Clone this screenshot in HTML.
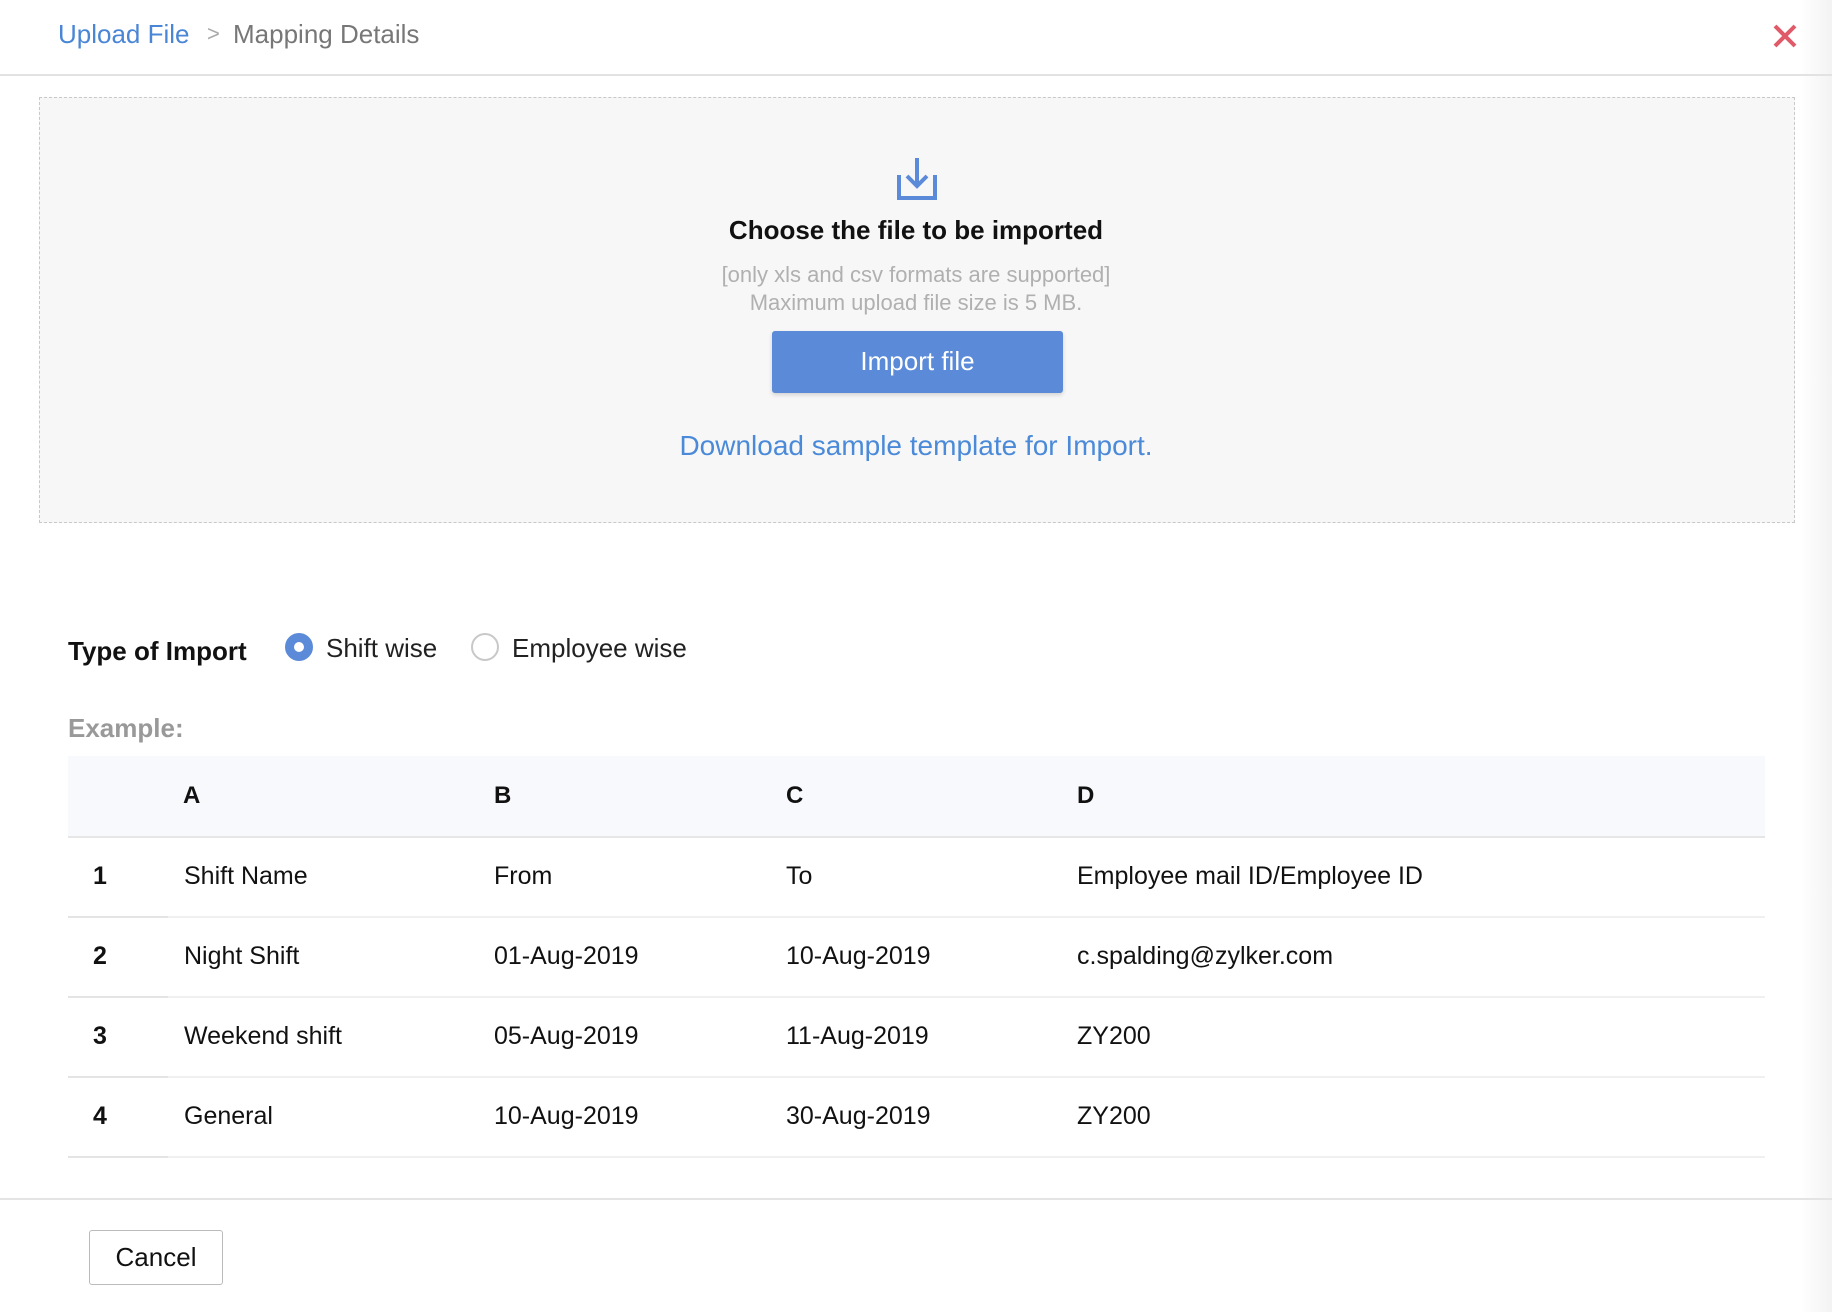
<!DOCTYPE html>
<html><head><meta charset="utf-8"><style>
body{margin:0;width:1832px;height:1312px;position:relative;background:#fff;font-family:"Liberation Sans",sans-serif;overflow:hidden}
.a{position:absolute;white-space:nowrap}
.shade{position:absolute;right:0;top:0;width:32px;height:1312px;background:linear-gradient(to right,#fff,#f3f3f3)}
</style></head><body>
<div class="shade"></div>
<div class="a" style="left:58px;top:19px;font-size:26px;color:#4a86d6">Upload File</div>
<div class="a" style="left:207px;top:21px;font-size:22px;color:#aaa">&gt;</div>
<div class="a" style="left:233px;top:19px;font-size:26px;color:#777">Mapping Details</div>
<svg class="a" style="left:1772px;top:23px" width="26" height="26" viewBox="0 0 26 26"><path d="M3 3L23 23M23 3L3 23" stroke="#e05a68" stroke-width="4"/></svg>
<div class="a" style="left:0;top:74px;width:1832px;height:2px;background:#e2e2e2"></div>
<div class="a" style="left:39px;top:97px;width:1754px;height:424px;border:1px dashed #c8c8c8;background:#f7f7f7"></div>
<svg class="a" style="left:897px;top:158px" width="40" height="42" viewBox="0 0 40 42"><path d="M2 17V40H38V17" fill="none" stroke="#5a8ad8" stroke-width="4"/><path d="M20 0V28M10 18L20 28L30 18" fill="none" stroke="#5a8ad8" stroke-width="4"/></svg>
<div class="a" style="left:0;width:1832px;text-align:center;top:215px;font-size:26px;font-weight:bold;color:#111">Choose the file to be imported</div>
<div class="a" style="left:0;width:1832px;text-align:center;top:261px;font-size:22px;color:#b0b0b0;line-height:28px">[only xls and csv formats are supported]<br>Maximum upload file size is 5 MB.</div>
<div class="a" style="left:772px;top:331px;width:291px;height:62px;background:#5a8ad8;border-radius:3px;box-shadow:0 2px 4px rgba(0,0,0,.15);color:#fff;font-size:26px;text-align:center;line-height:60px">Import file</div>
<div class="a" style="left:0;width:1832px;text-align:center;top:430px;font-size:28px;color:#4a8ad8">Download sample template for Import.</div>
<div class="a" style="left:68px;top:636px;font-size:26px;font-weight:bold;color:#111">Type of Import</div>
<div class="a" style="left:285px;top:633px;width:22px;height:22px;border:3px solid #5a8ad8;background:#5a8ad8;border-radius:50%"></div>
<div class="a" style="left:294px;top:642px;width:10px;height:10px;background:#fff;border-radius:50%"></div>
<div class="a" style="left:326px;top:633px;font-size:26px;color:#222">Shift wise</div>
<div class="a" style="left:471px;top:633px;width:24px;height:24px;border:2px solid #c8c8c8;border-radius:50%;background:#fff"></div>
<div class="a" style="left:512px;top:633px;font-size:26px;color:#222">Employee wise</div>
<div class="a" style="left:68px;top:713px;font-size:26px;font-weight:bold;color:#999">Example:</div>
<div class="a" style="left:68px;top:756px;width:1697px;height:80px;background:#f8f9fc;border-bottom:2px solid #e6e6e6"></div>
<div class="a" style="left:183px;top:782px;font-size:24px;font-weight:bold;color:#111">A</div>
<div class="a" style="left:494px;top:782px;font-size:24px;font-weight:bold;color:#111">B</div>
<div class="a" style="left:786px;top:782px;font-size:24px;font-weight:bold;color:#111">C</div>
<div class="a" style="left:1077px;top:782px;font-size:24px;font-weight:bold;color:#111">D</div>

<div class="a" style="left:68px;top:916px;width:1697px;height:2px;background:#f0f0f0"></div>
<div class="a" style="left:68px;top:996px;width:1697px;height:2px;background:#f0f0f0"></div>
<div class="a" style="left:68px;top:1076px;width:1697px;height:2px;background:#f0f0f0"></div>
<div class="a" style="left:68px;top:1156px;width:1697px;height:2px;background:#f0f0f0"></div>
<div class="a" style="left:68px;top:916px;width:100px;height:2px;background:#e4e4e4"></div>
<div class="a" style="left:68px;top:996px;width:100px;height:2px;background:#e4e4e4"></div>
<div class="a" style="left:68px;top:1076px;width:100px;height:2px;background:#e4e4e4"></div>
<div class="a" style="left:68px;top:1156px;width:100px;height:2px;background:#e4e4e4"></div>

<div style="font-size:25px;color:#111">
<div class="a" style="left:93px;top:862px;font-weight:bold">1</div>
<div class="a" style="left:184px;top:862px">Shift Name</div>
<div class="a" style="left:494px;top:862px">From</div>
<div class="a" style="left:786px;top:862px">To</div>
<div class="a" style="left:1077px;top:862px">Employee mail ID/Employee ID</div>
<div class="a" style="left:93px;top:942px;font-weight:bold">2</div>
<div class="a" style="left:184px;top:942px">Night Shift</div>
<div class="a" style="left:494px;top:942px">01-Aug-2019</div>
<div class="a" style="left:786px;top:942px">10-Aug-2019</div>
<div class="a" style="left:1077px;top:942px">c.spalding@zylker.com</div>
<div class="a" style="left:93px;top:1022px;font-weight:bold">3</div>
<div class="a" style="left:184px;top:1022px">Weekend shift</div>
<div class="a" style="left:494px;top:1022px">05-Aug-2019</div>
<div class="a" style="left:786px;top:1022px">11-Aug-2019</div>
<div class="a" style="left:1077px;top:1022px">ZY200</div>
<div class="a" style="left:93px;top:1102px;font-weight:bold">4</div>
<div class="a" style="left:184px;top:1102px">General</div>
<div class="a" style="left:494px;top:1102px">10-Aug-2019</div>
<div class="a" style="left:786px;top:1102px">30-Aug-2019</div>
<div class="a" style="left:1077px;top:1102px">ZY200</div>
</div>
<div class="a" style="left:0;top:1198px;width:1832px;height:2px;background:#e4e4e4"></div>
<div class="a" style="left:89px;top:1230px;width:132px;height:53px;border:1px solid #bbb;border-radius:3px;background:#fff;font-size:26px;color:#111;text-align:center;line-height:53px">Cancel</div>
</body></html>
